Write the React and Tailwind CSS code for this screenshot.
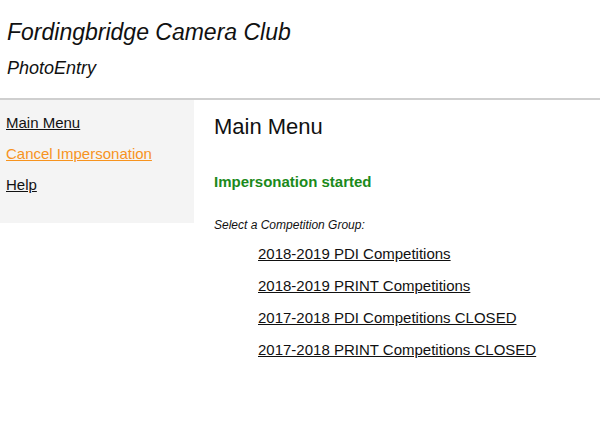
export default function App() {
  const groups = [
    "2018-2019 PDI Competitions",
    "2018-2019 PRINT Competitions",
    "2017-2018 PDI Competitions CLOSED",
    "2017-2018 PRINT Competitions CLOSED",
  ];

  return (
    <div className="min-h-[422px] bg-white font-['Liberation_Sans',Arial,sans-serif] text-[#111]">
      {/* Header */}
      <div className="h-[100px] border-b-2 border-[#cfcfcf] px-[7px] pt-[18px]">
        <h1 className="text-[23px] leading-[28px] italic">Fordingbridge Camera Club</h1>
        <div className="mt-[11px] text-[18px] leading-[22px] italic">PhotoEntry</div>
      </div>

      <div className="flex items-start">
        {/* Sidebar */}
        <div className="flex w-[194px] flex-col gap-[13px] bg-[#f4f4f4] pt-[14px] pb-[29px] pl-[6px] text-[15px] leading-[18px]">
          <a href="#" className="underline">Main Menu</a>
          <a href="#" className="text-[#f7931e] underline">Cancel Impersonation</a>
          <a href="#" className="underline">Help</a>
        </div>

        {/* Content */}
        <div className="pl-[20px] pt-[14px]">
          <h2 className="text-[22px] leading-[26px]">Main Menu</h2>
          <p className="mt-[33px] text-[15px] leading-[18px] font-bold text-[#1b8a1b]">Impersonation started</p>
          <p className="mt-[27px] text-[12px] leading-[14px] italic">Select a Competition Group:</p>
          <ul className="mt-[13px] flex flex-col gap-[14px] pl-[44px] text-[15px] leading-[18px]">
            {groups.map((g) => (
              <li key={g}>
                <a href="#" className="underline">{g}</a>
              </li>
            ))}
          </ul>
        </div>
      </div>
    </div>
  );
}
